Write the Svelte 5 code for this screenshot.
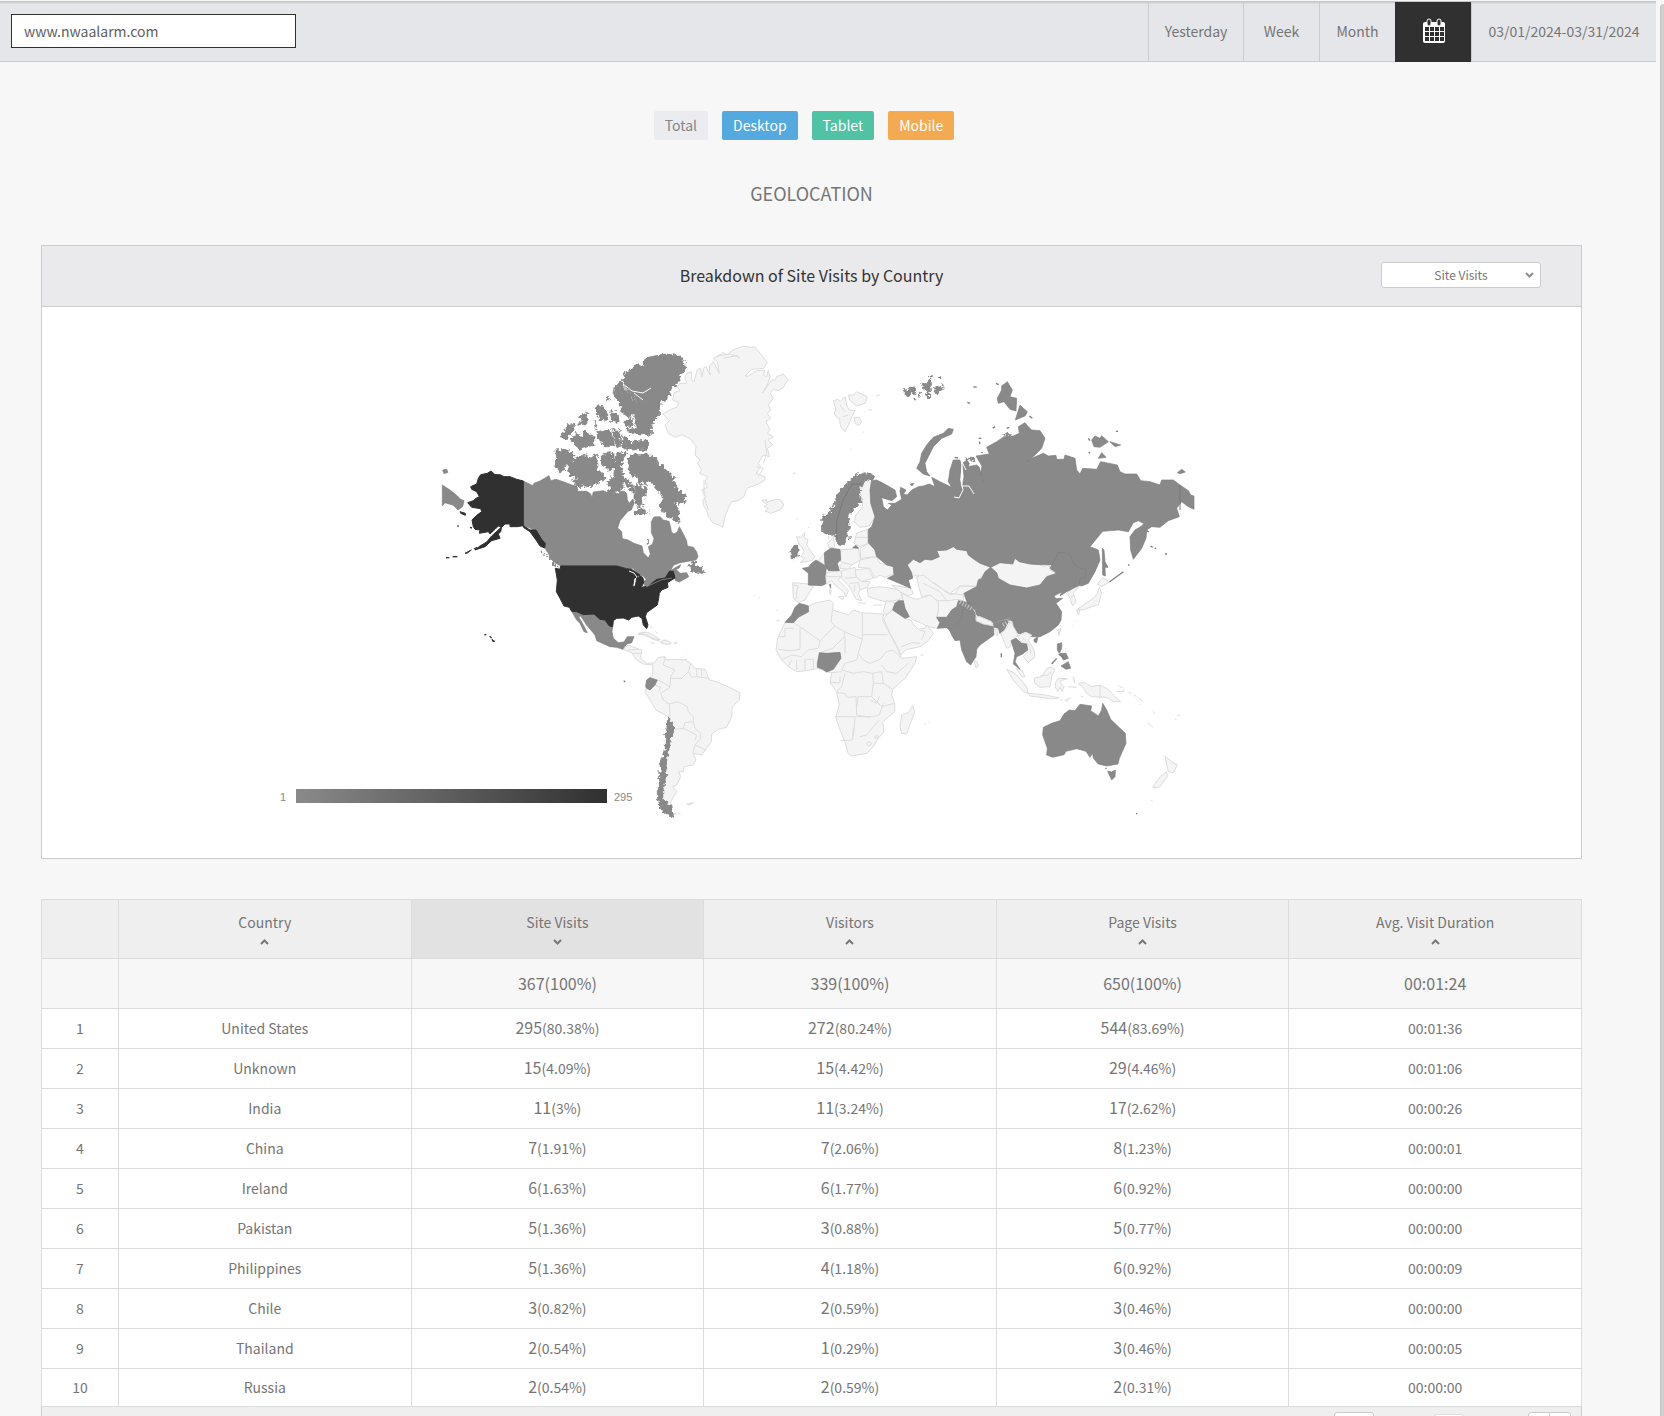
<script lang="ts">
    let site: string = "www.nwaalarm.com";
    let metric: string = "Site Visits";
    let page: number = 1;

    const metrics = ["Site Visits", "Visitors", "Page Visits"];
    const columns = ["Country", "Site Visits", "Visitors", "Page Visits", "Avg. Visit Duration"];
    const totals = ["", "", "367(100%)", "339(100%)", "650(100%)", "00:01:24"];

    const rows = [
        { country: "United States", visits: [295, "80.38%"], visitors: [272, "80.24%"], pages: [544, "83.69%"], time: "00:01:36" },
        { country: "Unknown", visits: [15, "4.09%"], visitors: [15, "4.42%"], pages: [29, "4.46%"], time: "00:01:06" },
        { country: "India", visits: [11, "3%"], visitors: [11, "3.24%"], pages: [17, "2.62%"], time: "00:00:26" },
        { country: "China", visits: [7, "1.91%"], visitors: [7, "2.06%"], pages: [8, "1.23%"], time: "00:00:01" },
        { country: "Ireland", visits: [6, "1.63%"], visitors: [6, "1.77%"], pages: [6, "0.92%"], time: "00:00:00" },
        { country: "Pakistan", visits: [5, "1.36%"], visitors: [3, "0.88%"], pages: [5, "0.77%"], time: "00:00:00" },
        { country: "Philippines", visits: [5, "1.36%"], visitors: [4, "1.18%"], pages: [6, "0.92%"], time: "00:00:09" },
        { country: "Chile", visits: [3, "0.82%"], visitors: [2, "0.59%"], pages: [3, "0.46%"], time: "00:00:00" },
        { country: "Thailand", visits: [2, "0.54%"], visitors: [1, "0.29%"], pages: [3, "0.46%"], time: "00:00:05" },
        { country: "Russia", visits: [2, "0.54%"], visitors: [2, "0.59%"], pages: [2, "0.31%"], time: "00:00:00" },
    ];

    // Map shapes, one block per part of the world. "none" has no visits,
    // "some" is the low end of the scale and "top" is the high end.
    const americasNorth = {
        none: [
            "M698 252 722 238 740 232 746 218 728 210 732 188 750 182 742 170 750 160 770 160 765 145 770 130 785 125 785 150 792 155 802 118 812 115 815 140 822 112 828 110 840 135 838 108 850 95 868 130 862 95 850 85 880 68 892 74 905 62 922 55 940 48 960 52 975 50 990 70 1000 82 1012 98 1000 115 965 118 945 138 955 138 980 122 1005 120 1000 135 1010 140 1015 120 1020 140 1012 165 998 188 1025 150 1036 150 1040 140 1060 132 1075 148 1060 172 1045 182 1030 178 1020 188 1030 205 1015 225 1022 240 1012 250 1022 265 1008 275 1020 300 1012 310 1030 320 1015 330 1028 345 1012 355 1018 380 1000 375 985 400 992 410 978 430 1005 440 1005 450 985 462 950 475 942 500 925 512 905 515 895 535 885 560 878 592 865 585 848 578 835 560 830 540 822 530 818 510 828 500 815 480 832 472 825 455 832 440 808 430 815 420 802 400 810 390 795 375 798 350 780 325 755 315 735 322 715 310 705 285 718 272Z",
            "M862 78 900 72 930 84M880 85 925 76M1005 330 1010 370 1000 400M822 450 822 500 835 540M980 410 1000 415 985 440",
            "M995 512 1010 508 1010 518 1018 514 1030 510 1050 508 1062 525 1050 540 1022 550 1005 543 1015 536 1002 530 1012 524Z",
            "M625 914 650 906 675 918 692 930 672 926 650 914ZM695 935 708 930 724 938 718 942 700 942ZM660 890 668 894M676 904 684 912M732 939H742M970 797H974M986 803H990M1040 842H1043M1040 872H1048M1090 430H1096M1100 566H1104",
        ],
        some: [
            "M280 453 308 467 312 460 330 453 340 447 357 437 362 452 378 448 400 455 425 465 440 468 444 480 440 484 470 484 482 492 486 503 490 486 520 482 530 487 548 475 556 488 565 492 572 484 582 484 590 490 592 510 598 520 608 508 612 520 604 540 594 544 580 560 570 572 563 594 575 605 577 626 594 630 612 640 636 648 640 668 655 684 661 672 655 650 668 642 672 625 664 608 664 575 672 561 690 560 700 570 717 574 722 592 724 606 732 612 742 606 748 590 760 612 770 632 772 648 790 652 800 666 804 680 798 690 775 694 750 698 730 706 722 722 738 712 752 704 748 714 738 718 750 730 770 728 776 740 748 756 737 752 733 740 728 722 718 724 706 744 682 746 660 762 645 768 640 760 648 748 640 738 620 735 610 715 595 716 560 708 392 708 378 700 365 688 355 670 345 655 335 628 318 605 300 594 280 587Z",
            "M425 844 440 845 460 854 492 852 510 868 525 870 538 888 548 890 546 905 550 925 565 938 582 936 592 920 612 920 605 938 590 942 578 958 560 952 540 950 500 932 495 915 470 885 452 858 446 860 460 885 472 908 462 905 450 880 440 870Z",
            "M37 465 60 480 80 496 92 508 102 512 98 530 84 540 70 526 45 518 37 528ZM38 420 50 418 54 427 42 431Z",
        ],
        // broken coastlines, drawn through the ragged filter
        rough: [
            "M786 700 792 690 798 704 812 712 822 722 818 731 800 726 782 722 780 712Z",
            "M593 385 605 374 640 374 665 376 680 390 680 402 700 408 712 424 733 442 733 460 740 474 752 486 768 496 762 522 750 514 748 525 735 510 736 525 748 540 746 565 748 578 730 568 706 556 697 540 690 528 697 510 695 492 680 480 672 462 655 452 648 466 628 456 622 440 605 438 595 420Z",
            "M612 548 625 530 645 540 652 548 628 554ZM612 500 615 470 630 462 650 478 642 500 634 515 640 525 625 530 612 515Z",
            "M560 370 590 366 582 385 575 410 580 440 600 455 612 470 612 490 600 480 585 462 560 450 548 440 553 400ZM514 378 535 366 552 372 552 415 535 420 515 400Z",
            "M412 420 418 395 440 384 455 376 470 378 478 388 496 375 502 385 500 420 520 432 525 448 505 452 500 465 440 470 425 452 450 443 420 438Z",
            "M378 360 400 358 418 365 436 378 418 395 404 412 392 428 372 410 380 392ZM530 455 545 445 575 452 580 475 560 485 540 478ZM578 318 592 322 605 335 650 330 656 345 650 358 600 360 578 352Z",
            "M580 135 605 115 625 103 640 110 640 92 655 82 690 74 715 72 745 78 760 92 770 112 745 140 750 148 725 180 706 212 690 222 688 255 672 270 665 292 664 312 630 315 590 304 600 295 620 290 610 262 622 240 628 225 610 205 600 188 582 165Z",
            "M555 172 572 152 580 170 600 190 606 205 628 225 618 245 600 262 575 250 567 220 552 200Z",
            "M497 225 520 232 533 250 534 272 510 268 500 250ZM540 240 565 255 568 272 545 275ZM528 200 538 200 538 214ZM447 262 468 245 473 260 470 285 442 282 460 272ZM410 288 434 282 432 300 412 325 392 325 400 305Z",
            "M425 322 440 310 455 322 466 300 480 318 495 322 495 345 470 352 450 358 425 338ZM500 300 520 305 540 300 548 320 550 345 525 348 505 330ZM548 298 570 302 572 350 556 345ZM492 272 502 290 496 292ZM580 278 600 265 612 285 590 292Z",
            "M330 650 340 680 336 660ZM350 672 368 690 388 712 372 704ZM655 632 660 632 660 640 655 640Z",
        ],
        top: [
            "M280 453 260 448 240 440 222 440 210 434 195 434 183 423 172 430 152 434 145 445 140 462 122 470 125 478 140 485 148 500 138 505 130 512 113 518 125 532 152 536 155 545 140 556 126 570 130 590 135 598 150 600 148 610 175 605 180 612 195 598 205 588 215 592 225 582 240 582 240 590 262 590 280 587 300 600 318 600 335 628 346 640 344 654 330 648 318 630 300 605 280 592Z",
            "M205 600 215 590 212 605 205 612 210 625 185 632 165 650 135 660 150 648 170 636 185 618ZM105 670 124 660 112 669ZM132 657 142 652M48 683 58 683M68 680 82 680M90 545 106 550 106 556 92 550ZM82 587 86 589M120 592 126 594M163 914 169 914M179 919 185 924M186 928 194 934 188 934Z",
            "M392 708 560 708 590 716 605 718 615 726 630 735 612 745 608 770 616 768 620 745 630 738 638 742 642 755 634 772 655 768 680 748 706 744 718 724 730 724 735 744 722 752 712 758 714 772 695 780 688 790 686 805 682 825 668 835 650 848 646 860 654 885 650 896 640 885 636 865 625 858 605 862 596 870 580 864 560 865 550 872 548 890 538 888 525 870 510 868 492 852 460 854 440 845 425 844 418 832 402 828 390 805 379 785 382 750 376 715 390 718Z",
        ],
    };

    const eurasia = {
        none: [
            "M160 212 175 208 180 215 195 200 200 225 208 240 225 242 215 262 205 285 195 305 182 290 178 265 170 262 162 250 168 240ZM205 195 220 195 230 185 262 200 255 220 230 228 210 212ZM222 262 238 262 245 275 238 286 225 280ZM180 225 195 245M190 260 205 255M288 198 300 194M255 245H258M265 240 276 240M248 308 252 305M210 358H214M40 431 46 429M50 566H54M84 592 88 594",
            "M232 470 245 475 250 458 262 450 270 455 275 480 278 520 285 558 268 588 240 592 222 575 228 555 248 530 245 500Z",
            "M50 620 62 622 75 608 72 622 84 630 80 645 90 660 105 680 95 692 60 698 75 685 62 680 72 665 65 650 58 645ZM143 640 160 622 165 650 148 655ZM115 690 133 670 135 705 118 695ZM38 758 85 762 100 770 90 785 75 810 55 818 40 805ZM40 765 55 768 50 785 48 808",
            "M137 740 165 730 182 740 175 750 200 775 205 782 198 800 190 785 165 765 155 752 140 762ZM137 728 178 722 195 728 185 740 140 740ZM175 800 192 800 188 810ZM148 778 155 782 150 795Z",
            "M182 660 235 655 242 690 215 705 182 695ZM180 705 190 698 215 705 205 718 180 715ZM222 640 230 610 262 598 265 640 240 650ZM225 622 262 622M240 655 265 640 285 660 288 680 242 685ZM240 690 288 680 300 700 340 708 340 732 315 742 300 735 285 745 270 715 235 712ZM225 720 265 715 280 745 245 755 228 740Z",
            "M185 722 225 712 228 740 245 755 270 755 262 772 240 780 235 790 245 812 228 808 215 782 205 765 185 745ZM195 745 228 742M210 760 235 758 240 780M225 765 222 785M235 818 258 820",
            "M262 775 300 770 335 775 360 780 368 805 345 812 315 815 290 808 265 800ZM335 765 392 775 400 790 385 798 360 785ZM280 825H306",
            "M382 705 400 688 420 698 435 688 455 690 478 680 470 662 500 660 520 650 530 658 560 662 565 675 585 690 630 710 620 725 595 750 590 768 540 768 510 790 490 780 465 760 440 752 412 735 395 740Z",
            "M410 740 430 735 455 755 490 780 510 795 525 790 540 768 590 770 552 790 550 812 530 815 505 812 475 815 450 795 425 800 415 765ZM430 760 480 785 500 812M510 790 552 795",
            "M472 812 505 812 530 808 550 812 530 830 515 840 500 862 470 862 475 840ZM365 790 385 800 410 808 430 802 450 795 475 815 475 840 470 862 480 878 472 895 445 890 425 880 400 870 388 860 375 835 370 815Z",
            "M318 812 345 818 338 838 318 855 310 845ZM310 865 338 840 375 865 392 870 402 885 415 898 435 895 440 885 460 910 445 932 420 950 375 960 363 975 355 955 330 910ZM365 950 395 938 420 940M420 900 435 905 425 930",
            "M632 712 660 698 698 702 705 685 718 695 750 702 780 704 790 710 808 704 810 720 830 730 800 740 780 765 740 774 690 765 655 745 650 728Z",
            "M860 790 890 765 898 768 880 790 888 815 878 828 868 800ZM872 800 884 796M836 905 842 895 840 905 836 916Z",
        ],
        some: [
            "M275 452 290 450 310 460 345 480 350 500 335 512 305 503 310 530 322 540 336 525 325 520 345 520 365 508 360 485 362 472 378 480 370 492 382 495 395 480 415 470 430 468 448 462 465 470 455 442 480 455 515 472 505 455 510 420 520 390 540 390 545 410 540 450 545 480 552 440 548 400 560 390 568 400 565 410 590 405 598 412 605 440 612 455 602 430 606 408 588 378 628 372 620 352 650 335 672 320 700 318 718 310 715 290 735 278 745 290 755 300 780 302 795 325 785 355 765 375 742 395 755 385 790 370 805 378 828 376 830 388 852 388 855 375 885 385 890 420 900 432 908 415 950 418 962 395 1012 405 1020 425 1035 432 1070 432 1082 452 1110 455 1140 465 1145 450 1180 450 1200 465 1225 482 1232 495 1242 498 1242 538 1225 530 1205 515 1190 535 1198 560 1165 572 1140 592 1115 590 1100 600 1098 625 1085 655 1060 688 1052 660 1050 620 1065 600 1085 588 1102 568 1090 580 1075 572 1060 578 1045 605 1015 600 968 604 930 650 955 660 960 690 945 725 925 760 905 768 898 766 825 706 808 704 780 704 750 702 718 695 705 685 698 702 660 698 632 712 600 700 585 690 565 675 560 662 530 658 520 650 500 660 470 662 478 680 455 690 435 688 420 698 400 688 382 705 395 728 398 745 385 750 392 775 370 765 322 745 342 735 340 710 320 705 290 680 285 660 265 638 265 598 275 590 285 560 272 520 270 480Z",
            "M682 155 697 180 690 200 710 205 708 243 690 238 672 215 655 220 652 205 665 180 665 168ZM706 270 720 225 730 235 742 245 735 258ZM748 258 757 265M410 415 420 395 425 370 440 345 460 322 490 310 505 295 520 298 515 312 485 325 460 350 445 380 435 400 440 425 450 438 430 432Z",
            "M935 330 945 318 960 325 965 317 985 335 960 352 942 350ZM990 335 1022 345 1005 350ZM955 385 965 368 978 382ZM925 325 930 332M926 366 930 370M1008 304H1014M1192 428 1205 418 1216 426 1200 431ZM580 171H590M562 217 570 220M638 295 645 290M596 325 604 325M598 335 600 342M648 160 656 164M680 295 688 292M604 368H608M390 462 402 460 396 468ZM524 382 534 384",
            "M967 655 972 660 975 695 984 712 975 712 976 738 968 735ZM1030 725 988 756M1044 706 1048 704M1112 648 1118 652M1124 654 1128 656M1100 602 1106 606",
            "M632 712 650 728 655 745 690 765 740 774 780 765 800 740 830 730 810 715 828 682 835 668 858 668 872 678 880 700 900 716 920 718 915 740 900 745 898 766 880 775 860 785 840 798 845 786 822 798 828 806 848 805 828 820 845 845 843 870 835 885 810 905 780 920 755 920 735 905 720 912 702 905 698 880 688 865 665 870 640 878 610 870 590 855 585 840 560 815 552 790 590 770 595 750 605 745 615 725Z",
            "M535 812 552 815 570 820 560 830 545 860 530 885 508 900 500 893 472 895 480 878 470 862 500 862 515 840 530 830Z",
            "M552 830 570 820 585 850 588 870 640 890 642 915 600 945 590 958 588 980 572 1005 560 995 545 960 540 930 525 932 515 915 508 900 530 885 545 860ZM640 880 665 872 690 868 680 885 668 908 660 912 655 895 642 892Z",
            "M133 668 152 655 180 658 182 690 172 700 178 722 145 722 135 705ZM67 715 85 712 95 700 108 690 140 710 135 740 137 762 125 767 85 765 85 730ZM148 764 152 762 152 775ZM218 653 228 646 236 655ZM345 820 355 812 370 812 375 835 388 860 375 865 338 840ZM58 820 85 828 86 845 55 862 40 878 15 877 35 855 45 832Z",
        ],
        rough: [
            "M125 565 150 545 165 520 175 485 200 460 230 435 262 428 288 440 275 452 258 448 245 470 238 472 243 515 230 525 205 560 208 590 200 610 195 640 178 648 165 610 145 618 128 605Z",
            "M368 183 400 170 408 185 385 200ZM428 165 450 150 455 175 440 188ZM460 180 490 165 488 178 468 192ZM435 195 455 190 450 205ZM448 140 458 136 455 144ZM474 142 485 143M415 190 425 185 420 200ZM404 206H410M668 310 695 315 680 322ZM560 385 580 385 585 395ZM30 665 42 648 54 652 55 680 35 687ZM203 625 212 624",
        ],
        top: ["M1156 672H1160"],
    };

    const oceania = {
        none: [
            "M428 203 448 216 425 230 412 222ZM418 232 425 250 415 285 395 290 370 300 352 298 370 285 400 265 412 250ZM350 300 360 300 355 315ZM338 346H341M350 335V332M294 360 302 355 297 376Z",
            "M48 320 60 320 95 335 97 347 70 342 48 332ZM135 360 155 333 160 350 175 375 155 390 152 410 140 415 122 370ZM103 358 115 360 112 378ZM172 378 198 367 215 375 205 390 222 420 225 440 205 458 190 440 203 425 200 402 185 398ZM190 385 210 410 212 430",
            "M168 475 185 480 195 500 185 500ZM140 478 165 490 200 530 205 550 190 545 160 510ZM205 550 250 554 298 564 270 566 210 558ZM302 570H308M314 572 332 564M318 576 325 570M222 505 245 500 262 474 275 472 285 480 275 500 270 530 240 532 225 520ZM240 498 262 495 275 485",
            "M288 515 295 505 322 506 302 512 302 520 312 530 306 545 300 532 294 545 285 530ZM340 500 344 515M325 530 350 532M340 512 345 520M362 558 370 560M378 550 382 545M355 520 375 518 395 530 420 525 445 538 460 555 482 575 460 575 440 562 395 560 380 550 372 535ZM420 525V565M470 545 490 545 492 538M476 528 490 534M505 546 515 552M522 555 530 560M536 562 548 576M538 584H541M578 604 584 612M562 638 580 652M644 626 650 630M652 618 660 614M42 452 50 455 55 468 48 475ZM220 487V490M332 485V488",
            "M615 738 635 755 652 765 640 788 625 785ZM620 785 622 800 598 832 578 832 600 800ZM583 836 587 836M572 871H578",
        ],
        some: [
            "M153 392 168 385 185 400 200 402 203 420 188 432 170 440 165 455 180 478 160 462 165 430ZM222 388 234 380 230 398 222 395ZM124 430V442",
            "M248 675 250 652 275 640 300 632 312 612 328 600 345 602 360 583 395 588 392 602 415 618 425 600 428 580 440 600 452 628 480 655 496 670 498 700 478 745 474 762 440 768 415 762 400 745 398 730 390 742 378 724 350 716 318 724 312 734 278 742 260 735 262 715ZM443 784 455 786 466 780 465 800 455 810ZM436 775H440M528 911H532",
            "M292 402 305 398 305 415 298 430 292 420ZM300 430 318 430 325 445 310 450 305 440ZM303 468 325 455 332 475 318 478ZM275 462 290 445M296 432 316 448",
        ],
        rough: [],
        top: [],
    };

    const south = {
        none: [
            "M610 12 627 18 650 8 690 0 700 10 698 30 730 40 745 45 760 30 785 38 850 42 848 60 858 80 890 140 905 175 950 170 945 190 915 235 878 268 875 285 884 310 884 335 848 365 852 395 835 415 820 440 800 460 755 468 745 462 735 425 722 395 707 352 718 315 710 275 690 248 695 218 680 215 655 205 620 212 590 215 565 200 545 180 528 150 533 115 555 68 582 68 600 40Z",
            "M582 68 660 122 655 145 625 150 605 170M600 85V148L570 152 533 148M533 110H555V85H582M697 33 693 65 705 78 733 95V110L698 145 662 157M787 38V118L733 95M787 104H862M660 122 705 78M787 118 775 160 770 180 735 190M735 110V160M775 160 790 180 810 190 840 178 860 155M735 190 725 210 760 220 790 215 818 220 845 215M860 155 880 150 905 175M845 195 860 215 890 220 925 190M845 215 850 250 878 268",
            "M735 220 725 260 710 275M818 220 820 250 815 290 775 290 770 320M710 278 735 280 740 292 768 290 770 345 810 352M707 350H820L838 345M765 352 760 410M722 422 758 420 760 385M780 410 800 405 820 380 838 360M820 250H850M815 290 845 320 884 310M838 345 850 310M838 290 830 310 810 300M590 210V180M615 210V178H640V208M545 180 575 165 605 170M565 200 575 180M825 408H835V415H825ZM800 430 810 425 815 432 805 438ZM695 218 725 215M690 248H720V230",
            "M938 317 944 335 935 360 920 402 905 400 900 380 905 345 925 338ZM974 374H978M986 368H989M962 165H970",
            "M158 195 175 172 195 170 200 180 225 178 255 180 272 190 285 205 315 208 328 240 350 245 388 262 420 278 418 300 397 320 395 350 380 382 355 388 335 402 334 425 305 465 280 460 288 480 280 495 252 500 250 515 236 515 242 530 230 555 218 560 230 575 212 605 215 640 230 642 205 640 185 590 195 540 208 352 168 330 135 275 138 265 140 240 158 225Z",
            "M195 172 190 195 225 210 212 230 210 260 175 240M210 262 182 280 190 300 208 312 235 305 262 320 265 335 280 350V365M208 312 210 352M223 388 250 385 255 368 280 365 285 385 302 400V415L285 435 278 460M250 385 290 405 285 420M212 235 245 235 265 215 272 190M265 215 275 232 290 230 328 235M290 205V230M305 208V230M285 435 318 450M165 255 182 262 175 275",
            "M70 148 85 135 118 148 125 150 122 175 140 190 158 188 155 195 130 192 108 178 95 158ZM85 150 118 148M95 160 122 160M115 100 135 96 160 110 178 124 160 118 135 106ZM180 128 192 120 208 126 200 132ZM152 128 164 130M222 129H232M258 152V155M255 178H262M260 612 280 608 268 616ZM235 642H242M530 32H533M530 62H536",
        ],
        some: [
            "M652 190 658 158 680 160 720 157 723 175 700 208 680 216 668 208 652 202ZM137 258 140 240 150 233 172 240 165 255 150 270 140 265ZM71 242 76 246",
        ],
        rough: [
            "M208 352 215 375 223 388 212 420 205 455 200 480 198 510 195 545 188 575 190 600 212 615 215 640 222 650 205 645 180 628 172 600 172 565 180 550 178 530 182 490 195 450 197 400 203 365Z",
        ],
        top: [],
    };

    const regions = [
        { x: 600, y: 600, shapes: south },
        { x: 430, y: 330, shapes: americasNorth },
        { x: 780, y: 330, shapes: eurasia },
        { x: 960, y: 510, shapes: oceania },
    ];

    // one path per outline, so an open border line never fills over a country
    const outlines = (paths: string[]) => paths.join("").match(/M[^M]+/g) ?? [];
</script>

<div class="app">
    <div class="content">
        <header class="topbar">
            <input class="site" type="text" aria-label="Website" bind:value={site}>
            <nav class="ranges">
                <button class="yesterday">Yesterday</button>
                <button>Week</button>
                <button>Month</button>
                <button class="calendar" aria-label="Pick dates">
                    <svg width="24" height="26" viewBox="0 0 24 26">
                        <rect x="1" y="4" width="22" height="21" rx="2" fill="#fff" />
                        <rect x="5" y="1" width="4" height="7" rx="2" fill="#303030" stroke="#fff" />
                        <rect x="15" y="1" width="4" height="7" rx="2" fill="#303030" stroke="#fff" />
                        <g fill="#303030">
                            {#each [9, 14, 19] as cy}
                                {#each [3, 8, 13, 18] as cx}
                                    <rect x={cx} y={cy} width="4" height="4" />
                                {/each}
                            {/each}
                        </g>
                    </svg>
                </button>
                <button class="dates">03/01/2024-03/31/2024</button>
            </nav>
        </header>

        <main>
            <div class="devices">
                <button class="total">Total</button>
                <button class="desktop">Desktop</button>
                <button class="tablet">Tablet</button>
                <button class="mobile">Mobile</button>
            </div>

            <h1>GEOLOCATION</h1>

            <section class="panel">
                <div class="panel-head">
                    <h2>Breakdown of Site Visits by Country</h2>
                    <div class="metric">
                        <select aria-label="Metric" bind:value={metric}>
                            {#each metrics as name}
                                <option>{name}</option>
                            {/each}
                        </select>
                        <svg width="9" height="6" viewBox="0 0 9 6"><path d="M1 1L4.500 4.500L8 1" /></svg>
                    </div>
                </div>
                <svg class="map" viewBox="270 330 1083 500" role="img" aria-label="Site visits by country">
                    <defs>
                        <linearGradient id="scale">
                            <stop offset="0" stop-color="#8a8a8a" />
                            <stop offset="1" stop-color="#303030" />
                        </linearGradient>
                        <filter id="ragged" x="-10%" y="-10%" width="120%" height="120%" color-interpolation-filters="sRGB">
                            <feTurbulence type="fractalNoise" baseFrequency="0.09" numOctaves="2" seed="4" />
                            <feDisplacementMap in="SourceGraphic" scale="22" xChannelSelector="R" yChannelSelector="G" />
                        </filter>
                    </defs>
                    {#each regions as region}
                        <g transform="translate({region.x} {region.y}) scale(0.33333)">
                            {#each outlines(region.shapes.none) as d}
                                <path class="none" class:line={!d.endsWith("Z")} {d} />
                            {/each}
                            {#each outlines(region.shapes.some) as d}
                                <path class="some" class:line={!d.endsWith("Z")} {d} />
                            {/each}
                            <g filter="url(#ragged)">
                                {#each outlines(region.shapes.rough) as d}
                                    <path class="some" class:line={!d.endsWith("Z")} {d} />
                                {/each}
                            </g>
                            {#each outlines(region.shapes.top) as d}
                                <path class="top" class:line={!d.endsWith("Z")} {d} />
                            {/each}
                        </g>
                    {/each}
                    <!-- fjords, lakes and rivers -->
                    <g class="water">
                        <path d="M623 384L632 391L643 393L651 388M634 393L643 400M629 571L634 573L637 577" />
                        <path d="M962 461L961 480L963 490L959 498L954 497M963 486L969 486L974 494M961 460L966 470" />
                        <path d="M960 602L972 609M1003 625L1010 621" class="hatch" />
                    </g>
                    <path class="border" d="M836 540L837 520L843 500L852 484L862 484M1180 485V510M672 578L661 580L646 587" />
                    <rect x="296" y="789" width="311" height="14" fill="url(#scale)" />
                    <text x="286" y="801" text-anchor="end">1</text>
                    <text x="614" y="801">295</text>
                </svg>
            </section>

            <div class="grid">
                <table>
                    <thead>
                        <tr>
                            <th class="num"></th>
                            {#each columns as name}
                                <th class:sorted={name === metric}>
                                    <button>
                                        {name}
                                        <svg width="9" height="6" viewBox="0 0 9 6">
                                            <path d={name === metric ? "M1 1L4.500 4.500L8 1" : "M1 5L4.500 1.500L8 5"} />
                                        </svg>
                                    </button>
                                </th>
                            {/each}
                        </tr>
                    </thead>
                    <tbody>
                        <tr class="totals">
                            {#each totals as value}
                                <td>{value}</td>
                            {/each}
                        </tr>
                        {#each rows as row, i}
                            <tr>
                                <td>{i + 1}</td>
                                <td>{row.country}</td>
                                {#each [row.visits, row.visitors, row.pages] as [count, share]}
                                    <td><span class="count">{count}</span>({share})</td>
                                {/each}
                                <td>{row.time}</td>
                            </tr>
                        {/each}
                    </tbody>
                </table>
                <div class="pager">
                    <input class="page" type="text" aria-label="Page" bind:value={page}>
                    <select class="size" aria-label="Rows per page"><option>10</option></select>
                    <div class="steps">
                        <button aria-label="Previous page"></button>
                        <button aria-label="Next page"></button>
                    </div>
                </div>
            </div>
        </main>
    </div>
    <div class="track"><div class="thumb"></div></div>
</div>

<style>
    :global(body) {
        background: #f7f7f7;
    }
    .app {
        height: 100vh;
        overflow: hidden;
        display: grid;
        grid-template-columns: 1fr 8px;
        font-family: "Noto Sans CJK SC", "Source Sans Pro", sans-serif;
        font-size: 14px;
        line-height: 20px;
        color: #757575;
    }
    button, input, select {
        font: inherit;
        color: inherit;
        margin: 0;
        padding: 0;
        border: 0;
        background: none;
        border-radius: 0;
    }
    .content {
        min-width: 0;
        overflow: hidden;
    }
    .topbar {
        box-sizing: border-box;
        height: 61px;
        margin-top: 1px;
        display: flex;
        align-items: center;
        justify-content: space-between;
        background: #e5e6ea;
        border-top: 1px solid #c4c8c5;
        border-bottom: 1px solid #cbccd0;
        box-shadow: inset 0 2px 2px -1px #c8cacb;
    }
    .site {
        box-sizing: border-box;
        width: 285px;
        height: 34px;
        margin: 0 0 2px 11px;
        padding: 0 12px;
        background: #fff;
        border: 1px solid #303030;
        color: #606060;
    }
    .ranges {
        display: flex;
        align-self: stretch;
        margin-bottom: -1px;
    }
    .ranges button {
        box-sizing: border-box;
        min-width: 76px;
        padding: 0 0 2px;
        border-left: 1px solid #cbccd0;
        border-bottom: 1px solid #cbccd0;
    }
    .ranges .yesterday {
        min-width: 95px;
    }
    .ranges .dates {
        min-width: 185px;
    }
    .ranges .calendar {
        background: #303030;
        border-color: #303030;
    }
    .calendar svg {
        display: block;
        margin: 0 auto;
    }
    main {
        padding: 49px 74px 0 41px;
    }
    .devices {
        display: flex;
        justify-content: center;
        gap: 14px;
        padding-right: 15px;
    }
    .devices button {
        height: 29px;
        padding: 0 11px 2px;
        border-radius: 2px;
        color: #fff;
    }
    .devices .total {
        background: #ebecf0;
        color: #858588;
    }
    .desktop {
        background: #54a9de;
    }
    .tablet {
        background: #50c3a5;
    }
    .mobile {
        background: #f3aa51;
    }
    h1 {
        margin: 39px 0 38px;
        text-align: center;
        font-size: 18px;
        font-weight: 400;
        line-height: 28px;
    }
    .panel {
        background: #fff;
        border: 1px solid #cbcccd;
    }
    .panel-head {
        box-sizing: border-box;
        display: grid;
        grid-template-columns: 1fr auto 1fr;
        align-items: center;
        height: 61px;
        padding-bottom: 2px;
        background: #eaeaec;
        border-bottom: 1px solid #cbcccd;
    }
    h2 {
        grid-column: 2;
        margin: 0;
        font-size: 16px;
        font-weight: 400;
        line-height: 24px;
        color: #333;
    }
    .metric {
        display: grid;
        justify-self: end;
        align-items: center;
        margin-right: 40px;
    }
    .metric select {
        grid-area: 1 / 1;
        box-sizing: border-box;
        width: 160px;
        height: 26px;
        appearance: none;
        text-align: center;
        text-align-last: center;
        font-size: 12px;
        background: #fff;
        border: 1px solid #cbcccd;
        border-radius: 3px;
    }
    .metric svg {
        grid-area: 1 / 1;
        justify-self: end;
        margin-right: 7px;
        pointer-events: none;
    }
    .metric path, th path {
        fill: none;
        stroke: #777;
        stroke-width: 2;
    }
    .metric path {
        stroke: #8c8c8c;
    }
    .map {
        display: block;
        width: 100%;
        max-width: 1083px;
        margin: 0 auto;
        padding: 23px 0 28px;
    }
    .map text {
        font-family: "Liberation Sans", Arial, sans-serif;
        font-size: 11px;
        fill: #888;
    }
    .none {
        fill: #f4f4f4;
        stroke: #dcdcdc;
        stroke-width: 3;
    }
    .some {
        fill: #898989;
        stroke: #7d7d7d;
        stroke-width: 2;
    }
    .top {
        fill: #303030;
        stroke: #303030;
        stroke-width: 3;
    }
    .line {
        fill: none;
        stroke-width: 4;
    }
    .none.line {
        stroke-width: 3;
    }
    .water path {
        fill: none;
        stroke: #fff;
        stroke-width: 1;
    }
    .water .hatch {
        stroke: #ccc;
        stroke-width: 4;
        stroke-dasharray: 1 2;
    }
    .border {
        fill: none;
        stroke: #777;
    }
    .grid {
        margin-top: 40px;
    }
    table {
        width: 100%;
        table-layout: fixed;
        border-collapse: collapse;
        background: #fff;
    }
    th, td {
        box-sizing: border-box;
        padding: 0 0 2px;
        border: 1px solid #dbdcdd;
        text-align: center;
        font-weight: 400;
        height: 40px;
    }
    th {
        height: 59px;
        background: #efefef;
    }
    th.num {
        width: 77px;
    }
    th.sorted {
        background: #e2e2e2;
    }
    th button {
        display: inline-flex;
        flex-flow: column;
        align-items: center;
        gap: 7px;
    }
    .totals td {
        height: 50px;
        font-size: 16px;
        background: #f7f7f7;
    }
    .count {
        font-size: 16px;
    }
    tbody tr:last-child td {
        height: 38px;
    }
    .pager {
        display: flex;
        justify-content: flex-end;
        align-items: flex-start;
        padding: 5px 10px;
        background: #efefef;
        border: 1px solid #cbcccd;
        border-top: 0;
    }
    .pager input, .pager select, .steps {
        box-sizing: border-box;
        height: 26px;
        appearance: none;
        background: #fff;
        border: 1px solid #cbcccd;
        border-radius: 3px;
    }
    .page {
        width: 40px;
        margin-right: 60px;
        text-align: center;
    }
    .pager .size {
        width: 30px;
        margin: 2px 64px 0 0;
        border-color: #ddd;
    }
    .steps {
        display: flex;
        width: 43px;
    }
    .steps button {
        flex: 1;
    }
    .steps button + button {
        border-left: 1px solid #cbcccd;
    }
    .track {
        padding: 4px 0 0 4px;
    }
    .thumb {
        height: 100%;
        background: #cfcfcf;
        border-left: 1px solid #c4c4c4;
        border-top-left-radius: 4px;
    }
</style>
